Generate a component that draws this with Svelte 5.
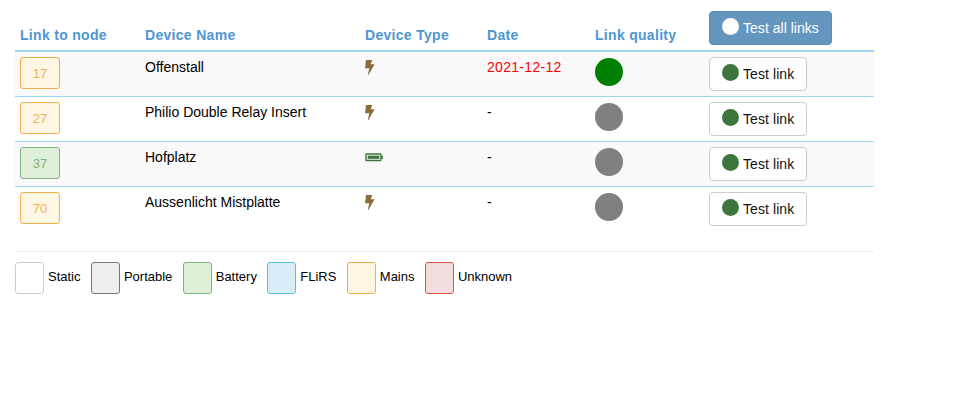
<script lang="ts">
    const nodes = [
        { id: 17, name: 'Offenstall', type: 'mains', date: '2021-12-12', recent: true },
        { id: 27, name: 'Philio Double Relay Insert', type: 'mains', date: '-', recent: false },
        { id: 37, name: 'Hofplatz', type: 'battery', date: '-', recent: false },
        { id: 70, name: 'Aussenlicht Mistplatte', type: 'mains', date: '-', recent: false },
    ]

    const legend = [
        { label: 'Static', cls: 'static' },
        { label: 'Portable', cls: 'portable' },
        { label: 'Battery', cls: 'battery' },
        { label: 'FLiRS', cls: 'flirs' },
        { label: 'Mains', cls: 'mains' },
        { label: 'Unknown', cls: 'unknown' },
    ]
</script>

<main>
    <table>
        <thead>
            <tr>
                <th class="c-node">Link to node</th>
                <th class="c-name">Device Name</th>
                <th class="c-type">Device Type</th>
                <th class="c-date">Date</th>
                <th class="c-quality">Link quality</th>
                <th class="c-action">
                    <button class="btn primary"><span class="dot"></span>Test all links</button>
                </th>
            </tr>
        </thead>
        <tbody>
            {#each nodes as node}
                <tr>
                    <td><button class="node {node.type}">{node.id}</button></td>
                    <td>{node.name}</td>
                    <td>
                        {#if node.type === 'mains'}
                            <svg class="bolt" width="10" height="15" viewBox="0 0 10 15" aria-hidden="true">
                                <path d="M1 0H7.3L5.7 4.2H9.6L3.4 15H2.8L4.3 8.2H0Z" fill="#8a6d3b" />
                            </svg>
                        {:else}
                            <svg class="batt" width="18" height="9" viewBox="0 0 18 9" aria-hidden="true">
                                <path fill-rule="evenodd" d="M1.5 0.3H15.5Q16.5 0.3 16.5 1.3V2.5H17.8V6H16.5V7.2Q16.5 8.2 15.5 8.2H1.5Q0.3 8.2 0.3 7.2V1.3Q0.3 0.3 1.5 0.3ZM1.7 1.7V6.8H15.3V1.7Z" fill="#3c763d" />
                                <rect x="2.7" y="2.7" width="11.6" height="3.1" fill="#3c763d" />
                            </svg>
                        {/if}
                    </td>
                    <td class:recent={node.recent}>{node.date}</td>
                    <td><div class="quality" class:good={node.recent}></div></td>
                    <td><button class="btn"><span class="dot green"></span>Test link</button></td>
                </tr>
            {/each}
        </tbody>
    </table>

    <hr />

    <div class="legend">
        {#each legend as item}
            <span class="swatch {item.cls}"></span>
            <span class="label">{item.label}</span>
        {/each}
    </div>
</main>

<style>
    :global(body) {
        font-family: "Liberation Sans", Arial, sans-serif;
        font-size: 14px;
        line-height: 20px;
        color: #000;
        background: #fff;
    }

    main {
        width: 859px;
        margin-left: 15px;
        padding-top: 11px;
    }

    table {
        width: 100%;
        border-collapse: collapse;
        table-layout: fixed;
    }

    th {
        box-sizing: border-box;
        text-align: left;
        vertical-align: bottom;
        padding: 0 5px 5px;
        color: #5096d2;
        font-weight: bold;
        letter-spacing: 0.3px;
        border-bottom: 2px solid #9ed6ee;
    }

    .c-node { width: 125px; }
    .c-name { width: 220px; }
    .c-type { width: 122px; }
    .c-date { width: 108px; }
    .c-quality { width: 114px; }

    td {
        height: 34px;
        padding: 5px;
        vertical-align: top;
        border-bottom: 1px solid #9ed6ee;
    }

    tbody tr:nth-child(odd) td {
        background: #f9f9f9;
    }

    tbody tr:last-child td {
        border-bottom: none;
    }

    td.recent {
        color: #f00;
        letter-spacing: 0.3px;
    }

    .node {
        display: block;
        width: 40px;
        height: 32px;
        padding: 0;
        margin: 0;
        border: 1px solid;
        border-radius: 3px;
        font: 13px "Liberation Sans", Arial, sans-serif;
    }

    .node.mains {
        background: #fdf6e3;
        border-color: #f0ad4e;
        color: #f2b05a;
    }

    .node.battery {
        background: #dff0d8;
        border-color: #80b180;
        color: #80b180;
    }

    .bolt {
        display: block;
        margin-top: 3px;
    }

    .batt {
        display: block;
        margin-top: 6px;
    }

    .quality {
        width: 28px;
        height: 28px;
        margin-top: 1px;
        border-radius: 50%;
        background: #808080;
    }

    .quality.good {
        background: #008000;
    }

    .btn {
        display: inline-flex;
        align-items: center;
        height: 34px;
        padding: 0 12px;
        border: 1px solid #ccc;
        border-radius: 4px;
        background: #fff;
        color: #111;
        font: 14px "Liberation Sans", Arial, sans-serif;
        letter-spacing: 0.08px;
        white-space: nowrap;
    }

    .btn.primary {
        background: #6495be;
        border-color: #5a8ab5;
        color: #fff;
        font-weight: normal;
        letter-spacing: 0.03px;
        vertical-align: bottom;
    }

    .dot {
        width: 17px;
        height: 17px;
        margin-right: 4px;
        margin-bottom: 3px;
        border-radius: 50%;
        background: #fff;
        flex: none;
    }

    .dot.green {
        background: #3c763d;
    }

    hr {
        height: 0;
        margin: 20px 0 10px;
        border: 0;
        border-top: 1px solid #eee;
    }

    .legend {
        display: flex;
        align-items: center;
    }

    .swatch {
        box-sizing: border-box;
        width: 29px;
        height: 32px;
        margin-right: 4px;
        border: 1px solid;
        border-radius: 3px;
    }

    .label {
        margin-right: 10.4px;
        padding-bottom: 2px;
        font-size: 13px;
    }

    .swatch.static { background: #fff; border-color: #ccc; }
    .swatch.portable { background: #eee; border-color: #777; }
    .swatch.battery { background: #dff0d8; border-color: #80b180; }
    .swatch.flirs { background: #d9edf7; border-color: #5bc0de; }
    .swatch.mains { background: #fdf6e3; border-color: #f0ad4e; }
    .swatch.unknown { background: #f2dede; border-color: #d9534f; }
</style>
